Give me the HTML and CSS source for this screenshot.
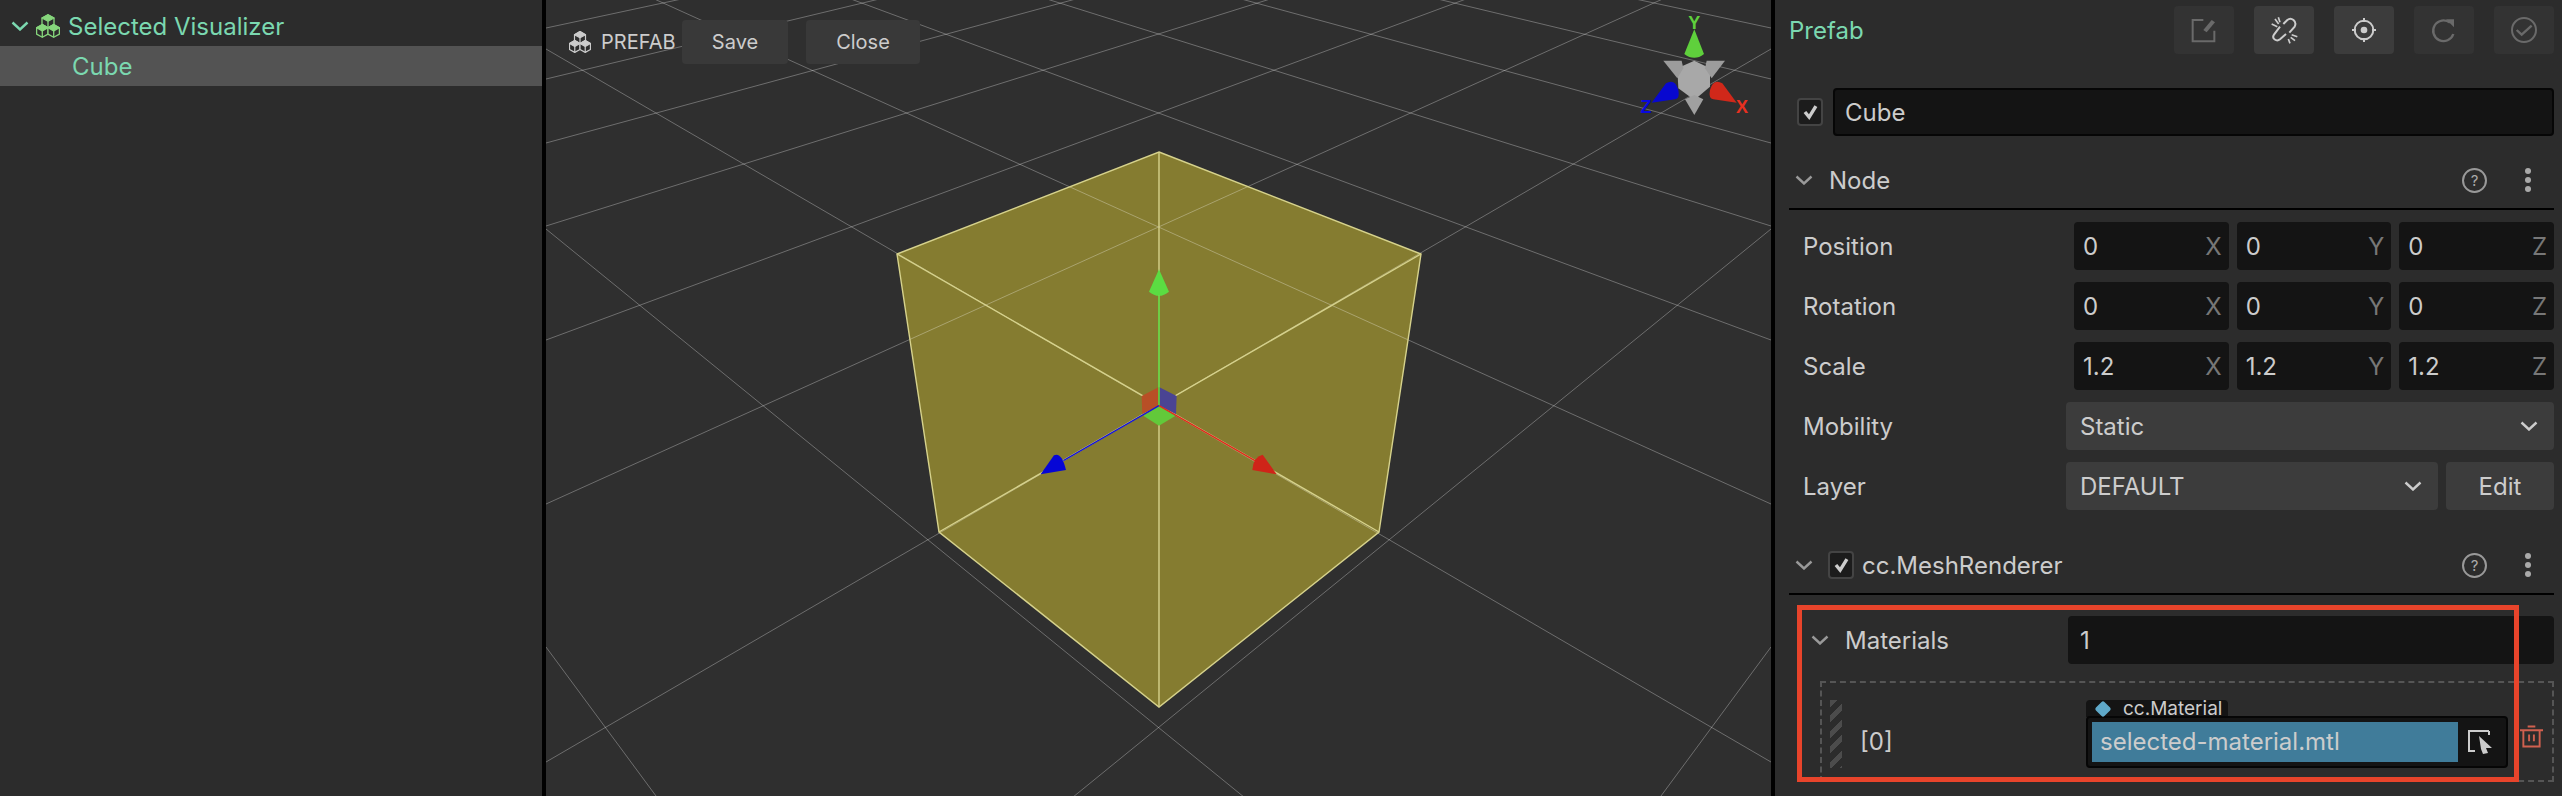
FILE: index.html
```html
<!DOCTYPE html>
<html lang="en">
<head>
  <meta charset="UTF-8">
  <title>Prefab editor</title>
  <link rel="stylesheet" href="styles.css">
</head>
<body>
  <svg class="defs" width="0" height="0">
    <symbol id="cubes" viewBox="0 0 24 24">
      <g stroke="currentColor" stroke-width="1.3" stroke-linejoin="round">
        <path d="M12 .7l6 3.300v6.600l-6 3.300-6-3.300V4z" fill="none"/>
        <path d="M6 4l6 3.300L18 4 12 .7z" fill="currentColor"/>
        <path d="M12 7.300v6.600" fill="none"/>
        <path d="M6.300 10.500l5.700 3.200v6.400l-5.700 3.200-5.700-3.200v-6.400z" fill="#2c2c2c"/>
        <path d="M.6 13.700l5.700 3.200 5.700-3.200-5.700-3.200z" fill="currentColor"/>
        <path d="M6.300 16.900v6.400" fill="none"/>
        <path d="M17.700 10.500l5.700 3.200v6.400l-5.700 3.200-5.700-3.200v-6.400z" fill="#2c2c2c"/>
        <path d="M12 13.700l5.700 3.200 5.700-3.200-5.700-3.200z" fill="currentColor"/>
        <path d="M17.700 16.900v6.400" fill="none"/>
      </g>
    </symbol>
    <symbol id="chevron" viewBox="0 0 18 10">
      <path d="M1.500 1.500L9 8.500l7.500-7" fill="none" stroke="currentColor" stroke-width="2.400"/>
    </symbol>
    <symbol id="tick" viewBox="0 0 26 28">
      <path d="M7 14l5 6 8-13" fill="none" stroke="currentColor" stroke-width="4"/>
    </symbol>
    <symbol id="dots" viewBox="0 0 8 28">
      <circle cx="4" cy="5" r="3" fill="currentColor"/>
      <circle cx="4" cy="14" r="3" fill="currentColor"/>
      <circle cx="4" cy="23" r="3" fill="currentColor"/>
    </symbol>
  </svg>

  <div class="app">
    <aside class="tree">
      <div class="tree-row">
        <svg class="tree-arrow"><use href="#chevron"/></svg>
        <svg class="tree-icon"><use href="#cubes"/></svg>
        <span>Selected Visualizer</span>
      </div>
      <div class="tree-row selected"><span>Cube</span></div>
    </aside>

    <main class="scene">
      <svg class="scene-canvas" viewBox="546 0 1225 796">
        <polygon class="cube" points="1159,152 1421,254 1379,532 1159,707 939,532 897,254"/>
        <g class="grid">
          <line x1="546" y1="647" x2="1771" y2="2306"/>
          <line x1="546" y1="229" x2="1771" y2="1226"/>
          <line x1="546" y1="49" x2="1771" y2="762"/>
          <line x1="546" y1="-50" x2="1771" y2="504"/>
          <line x1="546" y1="-114" x2="1771" y2="340"/>
          <line x1="546" y1="-158" x2="1771" y2="226"/>
          <line x1="546" y1="-190" x2="1771" y2="143"/>
          <line x1="546" y1="-215" x2="1771" y2="79"/>
          <line x1="546" y1="-234" x2="1771" y2="28"/>
          <line x1="546" y1="2306" x2="1771" y2="647"/>
          <line x1="546" y1="1226" x2="1771" y2="229"/>
          <line x1="546" y1="762" x2="1771" y2="49"/>
          <line x1="546" y1="504" x2="1771" y2="-50"/>
          <line x1="546" y1="340" x2="1771" y2="-114"/>
          <line x1="546" y1="226" x2="1771" y2="-158"/>
          <line x1="546" y1="143" x2="1771" y2="-190"/>
          <line x1="546" y1="79" x2="1771" y2="-215"/>
          <line x1="546" y1="28" x2="1771" y2="-234"/>
        </g>
        <g class="cube-edges">
          <polygon points="1159,152 1421,254 1379,532 1159,707 939,532 897,254"/>
          <line x1="1159" y1="152" x2="1159" y2="707"/>
          <line x1="897" y1="254" x2="1379" y2="532"/>
          <line x1="1421" y1="254" x2="939" y2="532"/>
        </g>
        <!-- move gizmo, numbers are from the 3x crop -->
        <g transform="translate(980 240) scale(.3333)">
          <polygon fill="#b84f26" points="537,441 485,468 487,522 537,497"/>
          <polygon fill="#4a4493" points="537,441 590,468 588,522 537,497"/>
          <polygon fill="#62c93a" points="537,497 587,527 537,557 490,527"/>
          <line x1="537" y1="167" x2="537" y2="497" stroke="#5fd03c" stroke-width="5"/>
          <line x1="537" y1="497" x2="250" y2="662" stroke="#1414d8" stroke-width="4"/>
          <line x1="537" y1="497" x2="825" y2="662" stroke="#e02a1c" stroke-width="4"/>
          <path fill="#5bdc42" d="M537 88L507 155Q537 180 567 155z"/>
          <path fill="#0606d6" d="M182 703L222 646Q245 635 258 690z"/>
          <path fill="#cf2418" d="M890 703L848 644Q820 650 817 690z"/>
        </g>
        <!-- orientation gizmo top right -->
        <g transform="translate(1600 10) scale(.3333)">
          <path fill="#5fd03c" d="M283 58L253 132Q283 155 312 132z"/>
          <path fill="#0808d0" d="M155 278L198 220Q225 205 235 240 240 265 225 268z"/>
          <path fill="#d0281a" d="M410 278L367 220Q340 205 330 240 325 265 340 268z"/>
          <polygon fill="#a8a8a8" points="283,152 330,175 330,230 283,270 235,235 232,175"/>
          <polygon fill="#9c9c9c" points="190,152 245,152 250,175 232,205"/>
          <polygon fill="#9c9c9c" points="375,152 320,152 315,175 335,205"/>
          <polygon fill="#a0a0a0" points="283,315 255,268 283,255 310,268"/>
          <text class="axis" x="283" y="58" fill="#5fd03c">Y</text>
          <text class="axis" x="138" y="308" fill="#0808e0">Z</text>
          <text class="axis" x="426" y="308" fill="#e83020">X</text>
        </g>
      </svg>

      <div class="scene-bar">
        <svg class="prefab-icon"><use href="#cubes"/></svg>
        <span class="prefab-name">PREFAB</span>
        <button class="scene-btn save">Save</button>
        <button class="scene-btn close">Close</button>
      </div>
    </main>

    <section class="inspector">
      <div class="inspector-head">
        <span class="title">Prefab</span>
        <div class="tools">
          <button class="tool off">
            <svg viewBox="0 0 180 144"><path d="M88 42H56V106H121V74" fill="none" stroke="currentColor" stroke-width="6"/><path d="M88 72L113 42 123 49 98 79z" fill="currentColor"/></svg>
          </button>
          <button class="tool">
            <svg viewBox="0 0 180 144"><path d="M88 54L100 42C112 32 130 46 122 62L106 80M78 62L60 86C52 98 68 108 78 100L96 84" fill="none" stroke="currentColor" stroke-width="6"/><path d="M53 54L70 62M63 39L74 54M73 34L78 49M113 86L130 92M110 94L123 104M103 99L108 112" stroke="currentColor" stroke-width="5"/></svg>
          </button>
          <button class="tool">
            <svg viewBox="0 0 180 144"><circle cx="90" cy="72" r="28" fill="none" stroke="currentColor" stroke-width="6"/><circle cx="90" cy="72" r="10" fill="currentColor"/><path d="M90 36V48M90 96V108M54 72H66M114 72H126" stroke="currentColor" stroke-width="6"/></svg>
          </button>
          <button class="tool off">
            <svg viewBox="0 0 180 144"><path d="M108 50A31 31 0 1 0 118 84" fill="none" stroke="currentColor" stroke-width="7"/><path d="M96 40H120V64z" fill="currentColor"/></svg>
          </button>
          <button class="tool off">
            <svg viewBox="0 0 180 144"><circle cx="90" cy="72" r="36" fill="none" stroke="currentColor" stroke-width="6"/><path d="M68 72L83 86 113 59" fill="none" stroke="currentColor" stroke-width="7"/></svg>
          </button>
        </div>
      </div>

      <div class="name-row">
        <span class="checkbox"><svg><use href="#tick"/></svg></span>
        <div class="field name-field">Cube</div>
      </div>

      <div class="section-head">
        <svg class="arrow"><use href="#chevron"/></svg>
        <span class="section-title">Node</span>
        <span class="help">?</span>
        <svg class="more"><use href="#dots"/></svg>
      </div>

      <div class="prop">
        <span class="prop-label">Position</span>
        <div class="vec">
          <div class="field num"><span>0</span><span class="axis-tag">X</span></div>
          <div class="field num"><span>0</span><span class="axis-tag">Y</span></div>
          <div class="field num"><span>0</span><span class="axis-tag">Z</span></div>
        </div>
      </div>
      <div class="prop">
        <span class="prop-label">Rotation</span>
        <div class="vec">
          <div class="field num"><span>0</span><span class="axis-tag">X</span></div>
          <div class="field num"><span>0</span><span class="axis-tag">Y</span></div>
          <div class="field num"><span>0</span><span class="axis-tag">Z</span></div>
        </div>
      </div>
      <div class="prop">
        <span class="prop-label">Scale</span>
        <div class="vec">
          <div class="field num"><span>1.2</span><span class="axis-tag">X</span></div>
          <div class="field num"><span>1.2</span><span class="axis-tag">Y</span></div>
          <div class="field num"><span>1.2</span><span class="axis-tag">Z</span></div>
        </div>
      </div>
      <div class="prop">
        <span class="prop-label">Mobility</span>
        <div class="select wide"><span>Static</span><svg class="select-arrow"><use href="#chevron"/></svg></div>
      </div>
      <div class="prop">
        <span class="prop-label">Layer</span>
        <div class="layer">
          <div class="select"><span>DEFAULT</span><svg class="select-arrow"><use href="#chevron"/></svg></div>
          <button class="edit-btn">Edit</button>
        </div>
      </div>

      <div class="section-head mesh">
        <svg class="arrow"><use href="#chevron"/></svg>
        <span class="checkbox"><svg><use href="#tick"/></svg></span>
        <span class="section-title">cc.MeshRenderer</span>
        <span class="help">?</span>
        <svg class="more"><use href="#dots"/></svg>
      </div>

      <div class="prop materials">
        <span class="prop-label">
          <svg class="arrow"><use href="#chevron"/></svg>
          Materials
        </span>
        <div class="field count">1</div>
      </div>

      <div class="array-item">
        <div class="handle"></div>
        <span class="item-label">[0]</span>
        <div class="asset">
          <div class="asset-tab"><i class="diamond"></i>cc.Material</div>
          <div class="asset-box">
            <div class="asset-name">selected-material.mtl</div>
            <div class="asset-pick">
              <svg viewBox="0 0 24 24" width="24" height="24">
                <path d="M21 1H1V21H7M21 1V5" fill="none" stroke="currentColor" stroke-width="2"/>
                <path d="M11 7L24 19 18 19 20 24 15 25 13 20z" fill="currentColor" transform="translate(0 -1)"/>
              </svg>
            </div>
          </div>
        </div>
        <svg class="trash" viewBox="0 0 24 24">
          <path d="M8 1.500H16M0 5.500H24M3.500 5.500V22.500H20.500V5.500M9.500 10V17M14.500 10V17" fill="none" stroke="currentColor" stroke-width="2"/>
        </svg>
      </div>

      <div class="highlight"></div>
    </section>
  </div>
</body>
</html>
```

FILE: styles.css
```css
* {
  box-sizing: border-box;
}
html, body {
  margin: 0;
  height: 100%;
  overflow: hidden;
  background: #000;
}
body {
  font-family: Inter, "Liberation Sans", sans-serif;
  font-size: 24px;
  color: #ccc;
}
button {
  font: inherit;
  color: inherit;
  border: none;
  padding: 0;
}
.defs {
  position: absolute;
}
.app {
  display: flex;
  width: 2562px;
  height: 796px;
  gap: 4px;
}

/* left tree */
.tree {
  width: 542px;
  padding-top: 6px;
  background: #2c2c2c;
  color: #7bd8b0;
}
.tree-row {
  display: flex;
  align-items: center;
  height: 40px;
  padding-left: 11px;
}
.tree-row.selected {
  padding-left: 72px;
  background: #535353;
}
.tree-arrow {
  width: 18px;
  height: 10px;
}
.tree-icon {
  width: 24px;
  height: 24px;
  margin: 0 8px 0 7px;
  color: #86d67c;
}

/* scene view */
.scene {
  position: relative;
  width: 1225px;
  background: #2f2f2f;
}
.scene-canvas {
  display: block;
  width: 1225px;
  height: 796px;
}
.grid line {
  stroke: rgba(255, 255, 255, .3);
  stroke-width: 1;
}
.cube {
  fill: rgba(170, 156, 48, .7);
}
.cube-edges {
  fill: none;
  stroke: #d6d28c;
  stroke-width: 1.4;
}
.axis {
  font-family: "Liberation Sans", sans-serif;
  font-size: 54px;
  font-weight: bold;
  text-anchor: middle;
}
.scene-bar {
  position: absolute;
  left: 23px;
  top: 20px;
  display: flex;
  align-items: center;
  height: 44px;
}
.prefab-icon {
  width: 22px;
  height: 22px;
}
.prefab-name {
  width: 81px;
  margin-left: 10px;
  font-size: 20px;
}
.scene-btn {
  height: 44px;
  border-radius: 4px;
  background: #393939;
  font-size: 20px;
}
.save {
  width: 106px;
}
.close {
  width: 114px;
  margin-left: 18px;
}

/* inspector */
.inspector {
  position: relative;
  flex: 1;
  padding: 6px 8px 0 14px;
  background: #2c2c2c;
}
.inspector-head {
  display: flex;
  align-items: center;
  justify-content: space-between;
  height: 48px;
}
.title {
  color: #7bd8b0;
}
.tools {
  display: flex;
  gap: 20px;
}
.tool {
  width: 60px;
  height: 48px;
  border-radius: 4px;
  background: #3c3c3c;
  color: #ccc;
}
.tool.off {
  background: #333;
  color: #6a6a6a;
}
.tool svg {
  display: block;
  width: 60px;
  height: 48px;
}
.name-row {
  display: flex;
  align-items: center;
  gap: 10px;
  margin: 34px 0 0 8px;
}
.checkbox {
  display: block;
  flex: none;
  width: 26px;
  height: 28px;
  border: 2px solid #444;
  border-radius: 4px;
  background: #1c1c1c;
}
.checkbox svg {
  display: block;
  width: 22px;
  height: 24px;
}
.field {
  display: flex;
  align-items: center;
  height: 48px;
  border-radius: 4px;
  background: #141414;
}
.name-field {
  flex: 1;
  padding-left: 10px;
  border: 2px solid #060606;
}
.section-head {
  display: flex;
  align-items: center;
  height: 58px;
  margin-top: 16px;
  padding: 0 22px 0 6px;
  border-bottom: 2px solid #000;
}
.section-head.mesh {
  margin-top: 27px;
}
.arrow {
  flex: none;
  width: 18px;
  height: 10px;
  color: #999;
}
.section-title {
  flex: 1;
  margin-left: 16px;
}
.mesh .checkbox {
  margin-left: 15px;
}
.mesh .section-title {
  margin-left: 8px;
}
.help {
  flex: none;
  width: 25px;
  height: 25px;
  border: 2px solid #999;
  border-radius: 50%;
  color: #aaa;
  font-size: 15px;
  line-height: 21px;
  text-align: center;
}
.more {
  flex: none;
  width: 8px;
  height: 28px;
  margin-left: 37px;
  color: #aaa;
}
.prop {
  display: flex;
  align-items: center;
  justify-content: space-between;
  height: 48px;
  margin-top: 12px;
  padding-left: 14px;
}
.vec {
  display: flex;
  gap: 8px;
  width: 480px;
}
.num {
  flex: 1;
  justify-content: space-between;
  padding: 0 7px 0 9px;
}
.axis-tag {
  color: #777;
}
.select {
  display: flex;
  flex: 1;
  align-items: center;
  justify-content: space-between;
  height: 48px;
  padding: 0 16px 0 14px;
  border-radius: 4px;
  background: #3c3c3c;
}
.select.wide {
  flex: none;
  width: 488px;
}
.select-arrow {
  width: 18px;
  height: 10px;
}
.layer {
  display: flex;
  gap: 8px;
  width: 488px;
}
.edit-btn {
  width: 108px;
  height: 48px;
  border-radius: 4px;
  background: #3c3c3c;
}
.materials {
  margin-top: 21px;
  padding-left: 22px;
}
.materials .prop-label {
  display: flex;
  align-items: center;
  gap: 16px;
}
.count {
  width: 486px;
  padding-left: 12px;
}
.array-item {
  display: flex;
  align-items: flex-start;
  height: 101px;
  margin: 17px 0 0 31px;
  padding: 17px 0 0 8px;
  border: 2px dashed #555;
}
.handle {
  flex: none;
  width: 12px;
  height: 68px;
  background: repeating-linear-gradient(135deg, #4c4c4c 0 5px, transparent 5px 11px);
}
.item-label {
  flex: none;
  width: 226px;
  margin: 27px 0 0 18px;
}
.asset {
  display: flex;
  flex-direction: column;
  width: 422px;
}
.asset-tab {
  display: flex;
  align-items: center;
  align-self: flex-start;
  width: 142px;
  height: 17px;
  margin-bottom: -1px;
  padding-left: 11px;
  border-radius: 4px 4px 0 0;
  background: #141414;
  font-size: 19px;
}
.diamond {
  flex: none;
  width: 12px;
  height: 12px;
  margin-right: 14px;
  border-radius: 2px;
  background: #5fa9c9;
  transform: rotate(45deg);
}
.asset-box {
  display: flex;
  height: 52px;
  padding: 4px;
  border: 2px solid #060606;
  border-radius: 4px;
  background: #141414;
}
.asset-name {
  width: 366px;
  height: 40px;
  padding-left: 8px;
  background: #407c9a;
  line-height: 40px;
}
.asset-pick {
  display: flex;
  flex: 1;
  align-items: center;
  justify-content: center;
}
.trash {
  flex: none;
  width: 23px;
  height: 23px;
  margin: 25px 0 0 12px;
  color: #d0604f;
}
.highlight {
  position: absolute;
  left: 22px;
  top: 605px;
  width: 722px;
  height: 177px;
  border: 5px solid #e8442b;
}
```
